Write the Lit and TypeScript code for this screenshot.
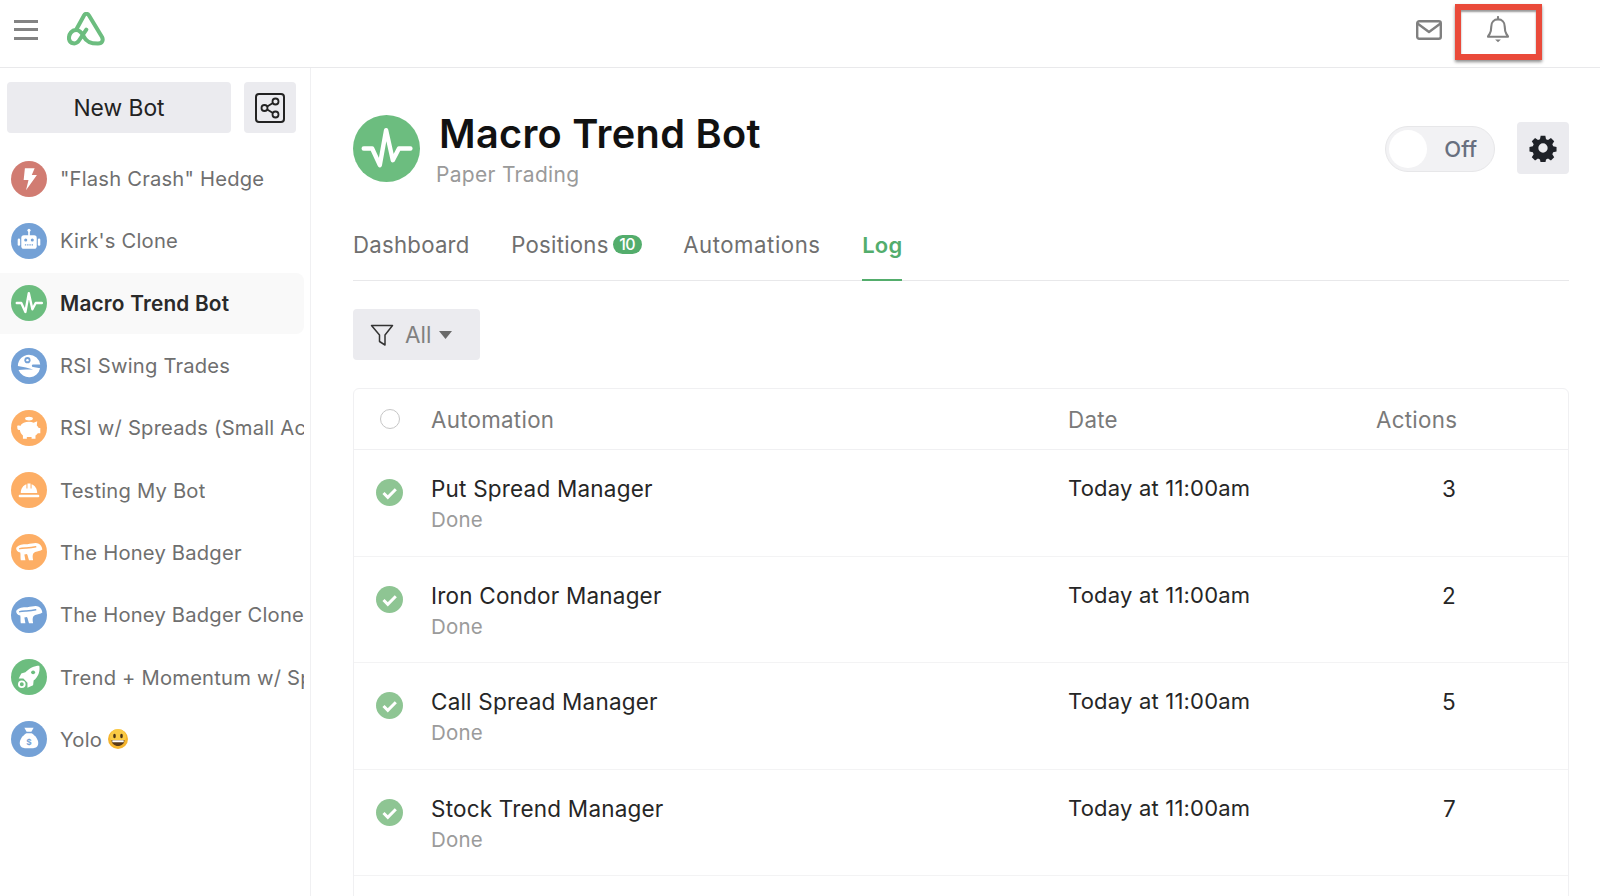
import { LitElement, html, css, svg } from "lit";
import { customElement } from "lit/decorators.js";

const G = "#6cbd7f", B = "#74a1d6", O = "#fdae65", R = "#d17c72";

const badger = (c: string) => svg`<path d="M5 13.500C6.500 11 11 9.500 16 10 20 9.500 24 8 27 9.500 29 10.500 30 12.500 30.500 15 28.500 16.500 26 16.500 23.500 17.500 21.500 18.500 20.500 20 21.500 25.500H17.500C16.500 23 16.500 21 15.500 19.500L13 20 14 25.500H9.500C9 23 9.500 20 9 18 6.500 17.500 5 16 5 13.500z" fill="#fff"/><path d="M8.500 14.200C12 12.700 17 14.500 24 12.500" fill="none" stroke=${c} stroke-width="1.500" stroke-linecap="round"/>`;

const icons: Record<string, unknown> = {
  bolt: svg`<path d="M13.500 7h9.500l-2.800 6.500h5L14.600 28.500l2.400-10h-4.700z" fill="#fff"/>`,
  robot: svg`<rect x="10" y="12" width="15" height="13" rx="2.500" fill="#fff"/><rect x="6.500" y="15" width="2.400" height="7" rx="1.200" fill="#fff"/><rect x="26.100" y="15" width="2.400" height="7" rx="1.200" fill="#fff"/><rect x="16.700" y="7.500" width="1.600" height="5" fill="#fff"/><circle cx="17.500" cy="7" r="1.500" fill="#fff"/><circle cx="14.300" cy="16.500" r="1.500" fill="${B}"/><circle cx="20.700" cy="16.500" r="1.500" fill="${B}"/><path d="M13.500 21.300h8" stroke="${B}" stroke-width="1.300" stroke-dasharray="1.300 .9"/>`,
  pulse: svg`<path d="M5.600 17.500H10L14 26.200 17.300 7.900 20.800 23.600 24 17.500H30" fill="none" stroke="#fff" stroke-width="2.300" stroke-linecap="round" stroke-linejoin="round"/>`,
  star: svg`<path d="M17.500 6.500a11 11 0 0 1 10.900 9.500h-6.900a1 1 0 0 0 0 2.500l6.800 1.200A11 11 0 0 1 7.300 21.500l7.200-.5h7l-7-2-7.800-1.500A11 11 0 0 1 17.500 6.500z" fill="#fff"/><circle cx="16" cy="11.800" r="3" fill="${B}"/><circle cx="16" cy="11.800" r="1.200" fill="#fff"/>`,
  piggy: svg`<path d="M6 15.500c.7-.6 2-.4 3 0 1.500-2.700 4.800-4 8.500-4 1.700 0 3.200.3 4.500 1l3.500-1.500-.4 4c.9.800 1.500 1.700 1.800 2.600h1.600v5h-2.400c-.6.900-1.400 1.700-2.300 2.300v3h-3.800v-1.700h-4.600v1.700h-3.800v-3.200c-1.800-1.200-2.800-3-2.900-5.200-1.200.1-2.300-.4-2.500-1.500z" fill="#fff"/><ellipse cx="17.500" cy="8.300" rx="3.800" ry="1.800" fill="#fff"/>`,
  hat: svg`<path d="M9.500 20.500c0-4.200 2.300-7.500 5.500-8.500v4h1V11.300h3V16h1v-4c3.200 1 5.500 4.300 5.500 8.500z" fill="#fff"/><rect x="7.500" y="22" width="20" height="2.500" rx="1" fill="#fff"/>`,
  badgerO: badger(O),
  badgerB: badger(B),
  rocket: svg`<path d="M27.500 6.500C28.500 12 26.500 17.500 22 21L21.500 25.500 16 28V23L12 19H7.500L10 14 14 13C17.500 9 22.500 6.500 27.500 6.500z" fill="#fff"/><circle cx="21.500" cy="13" r="1.900" fill="${G}"/><circle cx="10.500" cy="24.500" r="2.800" fill="none" stroke="#fff" stroke-width="1.800"/>`,
  bag: svg`<path d="M13 6.500h9l-2.200 4h-4.600z" fill="#fff"/><path d="M15 11.800h5c3.500 2 6.500 6 6.500 9.700 0 3.500-2.500 5-5 5h-8c-2.500 0-5-1.500-5-5 0-3.700 3-7.700 6.500-9.700z" fill="#fff"/><text x="17.500" y="23" font-size="8" font-weight="700" text-anchor="middle" fill="${B}" font-family="Inter, sans-serif">$</text>`,
};

const bots = [
  { n: '"Flash Crash" Hedge', c: R, i: "bolt" },
  { n: "Kirk's Clone", c: B, i: "robot" },
  { n: "Macro Trend Bot", c: G, i: "pulse", active: true },
  { n: "RSI Swing Trades", c: B, i: "star" },
  { n: "RSI w/ Spreads (Small Account)", c: O, i: "piggy" },
  { n: "Testing My Bot", c: O, i: "hat" },
  { n: "The Honey Badger", c: O, i: "badgerO" },
  { n: "The Honey Badger Clone", c: B, i: "badgerB" },
  { n: "Trend + Momentum w/ Spreads", c: G, i: "rocket" },
  { n: "Yolo", c: B, i: "bag", emoji: true },
];

const rows = [
  ["Put Spread Manager", "3"],
  ["Iron Condor Manager", "2"],
  ["Call Spread Manager", "5"],
  ["Stock Trend Manager", "7"],
];

const avatar = (color: string, icon: string, cls: string) => html`<svg class=${cls} viewBox="0 0 35 35"><circle cx="17.500" cy="17.500" r="17.500" fill=${color}/>${icons[icon]}</svg>`;

@customElement("app-root")
export class AppRoot extends LitElement {
  static styles = css`
    :host { display: block; width: 1600px; height: 896px; overflow: hidden; position: relative; background: #fff; font-family: Inter, "Noto Sans", sans-serif; color: #1d1f22; }
    * { box-sizing: border-box; }
    .top { height: 68px; border-bottom: 1px solid #e9e9eb; display: flex; align-items: center; padding: 0 17px 8px 14px; }
    .burger { width: 24px; height: 20px; display: flex; flex-direction: column; justify-content: space-between; }
    .burger i { display: block; height: 3px; background: #838383; }
    .logo { width: 38px; height: 34px; margin: 0 0 2px 29px; }
    .spacer { flex: 1; }
    .mail { width: 26px; height: 20px; margin-right: 44px; margin-top: 0; }
    .bell { width: 24px; height: 27px; margin-right: 73px; margin-top: 0; }
    .body { display: flex; height: 828px; }
    .side { width: 311px; border-right: 1px solid #f0f0f2; padding-top: 14px; flex: none; overflow: hidden; }
    .side-head { display: flex; gap: 13px; padding-left: 7px; margin-bottom: 14.500px; }
    .new { width: 224px; height: 51px; background: #ebebef; border-radius: 4px; display: flex; align-items: center; justify-content: center; font-size: 22.800px; color: #222; }
    .share { width: 52px; height: 51px; background: #ebebef; border-radius: 4px; display: flex; align-items: center; justify-content: center; }
    .share svg { width: 30px; height: 30px; }
    .bot { height: 62.300px; display: flex; align-items: center; padding-left: 11px; width: 304px; border-radius: 0 8px 8px 0; color: #6f6f6f; font-size: 20.200px; letter-spacing: .2px; white-space: nowrap; overflow: hidden; }
    .bot.active { background: #f9f9f9; color: #2a2a2a; font-weight: 600; font-size: 20.800px; height: 61px; margin: 0.650px 0; }
    .bot-av { width: 36px; height: 36px; flex: none; margin-right: 13px; }
    .bot span { overflow: hidden; }
    .emoji { width: 20px; height: 20px; margin-left: 6px; flex: none; }
    .main { flex: 1; padding: 45px 31px 0 42px; min-width: 0; }
    .head { display: flex; align-items: center; height: 68px; }
    .head-av { width: 67px; height: 67px; flex: none; margin: 2px 19px 0 0; }
    .head-text { flex: 1; padding-top: 4px; }
    h1 { margin: 0; font-size: 39.700px; line-height: 44px; font-weight: 600; color: #111; letter-spacing: .3px; }
    .sub { margin: 7px 0 0 -3px; font-size: 21px; line-height: 24px; color: #9a9a9a; letter-spacing: .3px; }
    .toggle { width: 110px; height: 46px; margin-top: 4px; border-radius: 23px; background: #f2f2f4; border: 1px solid #e7e7e9; position: relative; display: flex; align-items: center; justify-content: flex-end; padding-right: 17px; font-size: 22px; font-weight: 500; color: #68707f; }
    .knob { position: absolute; left: 3px; top: 3px; width: 38px; height: 38px; border-radius: 50%; background: #fff; }
    .gear { width: 52px; height: 52px; margin-top: 2px; background: #ebebef; border-radius: 4px; margin-left: 22px; display: flex; align-items: center; justify-content: center; }
    .gear svg { width: 28px; height: 28px; }
    .tabs { display: flex; gap: 41.500px; height: 70px; margin-top: 30px; border-bottom: 1px solid #e8e8ea; font-size: 22.200px; letter-spacing: .25px; color: #6f6f6f; align-items: flex-start; }
    .tab { height: 70px; padding-top: 20px; display: flex; align-items: flex-start; line-height: 28px; }
    .tab.wide { letter-spacing: .55px; }
    .tab.on { color: #53ad6c; font-weight: 600; font-size: 22px; border-bottom: 2px solid #53ad6c; }
    .badge { background: #53ad6c; color: #fff; font-size: 16px; font-weight: 500; line-height: 19px; height: 19px; width: 29px; border-radius: 10px; margin: 4px 0 0 4px; text-align: center; letter-spacing: -.5px; }
    .filter { width: 127px; height: 51px; background: #ebebef; border-radius: 4px; margin-top: 28px; display: flex; align-items: center; padding-left: 17px; font-size: 22.500px; color: #808080; }
    .filter svg.f { width: 24px; height: 24px; margin-right: 11px; }
    .filter svg.c { width: 13px; height: 8px; margin-left: 8px; margin-top: 1px; }
    .table { margin-top: 28px; border: 1px solid #f0f0f2; border-radius: 6px 6px 0 0; }
    .tr { display: grid; grid-template-columns: 77px 637px 1fr 80px 112px; }
    .tr > div { min-width: 0; }
    .th { height: 61px; align-items: center; font-size: 22.300px; letter-spacing: .3px; color: #7a7a7a; border-bottom: 1px solid #f0f0f2; }
    .th .num, .td .num { text-align: right; white-space: nowrap; }
    .radio { width: 20px; height: 20px; border-radius: 50%; border: 1px solid #c6c6c6; margin-left: 26px; }
    .td { height: 106.500px; padding-top: 24px; font-size: 22.500px; letter-spacing: .2px; color: #262626; border-bottom: 1px solid #f3f3f4; line-height: 29px; }
    .done { font-size: 20.500px; color: #9b9b9b; margin-top: 5px; line-height: 24px; }
    .check { width: 27px; height: 27px; margin: 5px 0 0 22px; display: block; }
    .date { white-space: nowrap; font-size: 22px; }
    .filler { height: 40px; }
    .highlight { position: absolute; left: 1455px; top: 4px; width: 87px; height: 56px; border: 6px solid #ea4a3a; box-shadow: 0 2px 3px rgba(0,0,0,.45), inset 0 2px 2px rgba(0,0,0,.4); pointer-events: none; }
  `;

  render() {
    return html`
      <div class="top">
        <div class="burger"><i></i><i></i><i></i></div>
        <svg class="logo" viewBox="0 0 38 34" fill="none" stroke="#6cbd7f" stroke-width="4" stroke-linecap="round" stroke-linejoin="round"><path d="M19.300 17.700 12 28.500C9 33 3 32 2 27 1.500 22 5 18 9 18 13 18 15 21 17 25 19 29 22 31.500 31 31.500 35.500 31.500 36.500 28 35 25L22 3.500C20.500 1.200 18 1.200 17 3.500L9 18"/></svg>
        <div class="spacer"></div>
        <svg class="mail" viewBox="0 0 26 20" fill="none" stroke="#808080" stroke-width="2.400" stroke-linejoin="round"><rect x="1.200" y="1.200" width="23.600" height="17.600" rx="2"/><path d="M1.500 3.500l11.500 8.500 11.500-8.500"/></svg>
        <svg class="bell" viewBox="0 0 25 28" fill="none" stroke="#808080" stroke-width="2.200" stroke-linecap="round" stroke-linejoin="round"><path d="M12.500 3.500c-4.300 0-7 3.200-7 7.300 0 4-.7 6.200-1.800 8-.6 1-1.500 1.600-1.600 2.700h20.800c-.1-1.100-1-1.700-1.600-2.700-1.100-1.800-1.800-4-1.800-8 0-4.100-2.700-7.300-7-7.300zM12.500 3.500V1"/><path d="M9.500 24.500h6l-3 2.700z" fill="#808080" stroke="none"/></svg>
      </div>
      <div class="body">
        <aside class="side">
          <div class="side-head">
            <div class="new">New Bot</div>
            <div class="share"><svg viewBox="0 0 30 30" fill="none" stroke="#222" stroke-width="1.800"><rect x="1" y="1" width="28" height="28" rx="3" stroke-width="2"/><circle cx="20.500" cy="8.500" r="3"/><circle cx="9.500" cy="15" r="3"/><circle cx="20.500" cy="21.500" r="3"/><path d="M12.200 13.400l5.700-3.400M12.200 16.600l5.700 3.400"/></svg></div>
          </div>
          ${bots.map((b) => html`
            <div class="bot ${b.active ? "active" : ""}">
              ${avatar(b.c, b.i, "bot-av")}
              <span>${b.n}</span>
              ${b.emoji ? html`<svg class="emoji" viewBox="0 0 20 20"><circle cx="10" cy="10" r="10" fill="#f5b52e"/><circle cx="10" cy="8" r="8" fill="#fbd04a" opacity=".8"/><ellipse cx="6.500" cy="7" rx="1.300" ry="2.200" fill="#4a3316"/><ellipse cx="13.500" cy="7" rx="1.300" ry="2.200" fill="#4a3316"/><path d="M3.500 11h13c0 3.500-3 6-6.500 6s-6.500-2.500-6.500-6z" fill="#5a3a18"/><path d="M4.300 11.200h11.400v2H4.300z" fill="#fff"/></svg>` : ""}
            </div>`)}
        </aside>
        <main class="main">
          <div class="head">
            ${avatar(G, "pulse", "head-av")}
            <div class="head-text">
              <h1>Macro Trend Bot</h1>
              <div class="sub">Paper Trading</div>
            </div>
            <div class="toggle"><div class="knob"></div>Off</div>
            <div class="gear"><svg viewBox="0 0 24 24"><path fill-rule="evenodd" fill="#1f2228" d="M10 1.500h4l.6 2.900 1.700.7 2.500-1.600 2.800 2.800-1.600 2.500.7 1.700 2.900.6v4l-2.900.6-.7 1.700 1.600 2.500-2.800 2.800-2.500-1.600-1.700.7-.6 2.900h-4l-.6-2.900-1.700-.7-2.500 1.600-2.800-2.800 1.600-2.500-.7-1.700-2.900-.6v-4l2.900-.6.7-1.700-1.600-2.500 2.800-2.800 2.500 1.600 1.700-.7zM12 8a4 4 0 1 0 0 8 4 4 0 0 0 0-8z"/></svg></div>
          </div>
          <div class="tabs">
            <div class="tab">Dashboard</div>
            <div class="tab">Positions<span class="badge">10</span></div>
            <div class="tab wide">Automations</div>
            <div class="tab on">Log</div>
          </div>
          <div class="filter">
            <svg class="f" viewBox="0 0 24 24" fill="none" stroke="#333" stroke-width="1.500" stroke-linejoin="round"><path d="M1.500 2.500h21L15 12v10l-5.500-3.500V12z"/></svg>
            All
            <svg class="c" viewBox="0 0 13 8"><path d="M0 0h13L6.500 8z" fill="#6a6a6a"/></svg>
          </div>
          <div class="table">
            <div class="tr th">
              <div><div class="radio"></div></div>
              <div>Automation</div>
              <div>Date</div>
              <div class="num">Actions</div>
              <div></div>
            </div>
            ${rows.map((r) => html`
              <div class="tr td">
                <div><svg class="check" viewBox="0 0 27 27"><circle cx="13.500" cy="13.500" r="13.500" fill="#8ec593"/><path d="M7.500 14l4.300 4.300 8-8" fill="none" stroke="#fff" stroke-width="3"/></svg></div>
                <div>${r[0]}<div class="done">Done</div></div>
                <div class="date">Today at 11:00am</div>
                <div class="num">${r[1]}</div>
                <div></div>
              </div>`)}
            <div class="filler"></div>
          </div>
        </main>
      </div>
      <div class="highlight"></div>
    `;
  }
}
